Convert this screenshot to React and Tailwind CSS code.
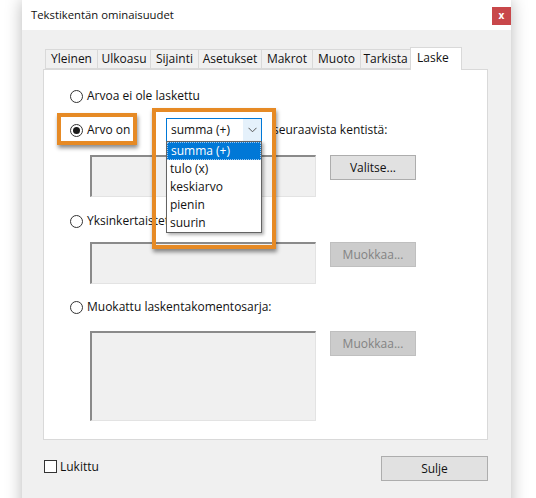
import React from 'react';

const tabs = [
  { label: 'Yleinen', w: 'w-[53px]' },
  { label: 'Ulkoasu', w: 'w-[54px]' },
  { label: 'Sijainti', w: 'w-[49px]' },
  { label: 'Asetukset', w: 'w-[64px]' },
  { label: 'Makrot', w: 'w-[52px]' },
  { label: 'Muoto', w: 'w-[49px]' },
  { label: 'Tarkista', w: 'w-[51px]' },
];

const options = ['summa (+)', 'tulo (x)', 'keskiarvo', 'pienin', 'suurin'];

// Radio circle, optionally checked
const Radio = ({ checked }) => (
  <span className="w-[13px] h-[13px] rounded-full border border-[#333333] bg-white flex items-center justify-center shrink-0">
    {checked && <span className="w-[7px] h-[7px] rounded-full bg-[#1a1a1a]" />}
  </span>
);

// Sunken read-only field list
const FieldBox = ({ h }) => (
  <div className={`w-[226px] ${h} bg-[#f0f0f0] border-t-2 border-l-2 border-r border-b border-t-[#8a8a8a] border-l-[#8a8a8a] border-r-[#e3e3e3] border-b-[#e3e3e3]`} />
);

const Button = ({ children, disabled, className = '' }) => (
  <button
    className={`h-[25px] border text-[12px] flex items-center justify-center ${disabled ? 'bg-[#cccccc] border-[#bfbfbf] text-[#838383]' : 'bg-[#e1e1e1] border-[#adadad] text-[#111]'} ${className}`}
  >
    {children}
  </button>
);

const App = () => {
  return (
    <div className="w-[536px] h-[498px] bg-white relative overflow-hidden text-[12px] text-[#111]" style={{ fontFamily: '"Open Sans", "Noto Sans", sans-serif' }}>
      {/* Dialog */}
      <div className="ml-[22px] w-[489px] h-[520px] bg-[#f0f0f0] shadow-[0_0_16px_rgba(0,0,0,0.28)] flex flex-col">
        {/* Title bar */}
        <div className="h-[30px] bg-white flex items-start justify-between">
          <span className="pl-[9px] pt-[7px] text-[11.3px]">Tekstikentän ominaisuudet</span>
          <button className="mt-[7px] w-[19px] h-[18px] bg-[#c8474a] text-white text-[10px] font-bold flex items-center justify-center leading-none pb-[2px]">
            x
          </button>
        </div>

        {/* Body */}
        <div className="pl-[21px] pr-[23px] pt-[17px]">
          {/* Tab strip */}
          <div className="flex items-end pl-[2px] h-[22px]">
            {tabs.map((t) => (
              <div
                key={t.label}
                className={`${t.w} h-[20px] border border-[#d9d9d9] -ml-px first:ml-0 bg-[#f0f0f0] text-[12px] flex items-center justify-center`}
              >
                {t.label}
              </div>
            ))}
            <div className="w-[52px] h-[23px] -ml-px border border-b-0 border-[#d9d9d9] bg-white relative z-10 -mb-px pl-[6px] pt-[1px] text-[12px]">
              Laske
            </div>
          </div>

          {/* Panel */}
          <div className="h-[371px] bg-white border border-[#d9d9d9] pl-[26px] pt-[16px] flex flex-col">
            <div className="h-[20px] flex items-center gap-[4px]">
              <Radio />
              <span>Arvoa ei ole laskettu</span>
            </div>

            <div className="h-[24px] mt-[12px] flex items-center">
              <div className="w-[96px] flex items-center gap-[4px]">
                <Radio checked />
                <span>Arvo on</span>
              </div>
              <div className="w-[96px] h-[24px] border border-[#0078d7] bg-white flex items-center">
                <span className="flex-1 pl-[4px]">summa (+)</span>
                <span className="w-[18px] h-full bg-[#e5f1fb] flex items-center justify-center">
                  <svg width="9" height="6" viewBox="0 0 9 6" fill="none">
                    <path d="M0.5 0.8 L4.5 4.8 L8.5 0.8" stroke="#555" strokeWidth="1" />
                  </svg>
                </span>
              </div>
              <span className="ml-[11px]">seuraavista kentistä:</span>
            </div>

            <div className="mt-[13px] ml-[20px] flex items-start gap-[14px]">
              <FieldBox h="h-[42px]" />
              <Button className="w-[86px] h-[24px]">Valitse...</Button>
            </div>

            <div className="h-[20px] mt-[14px] flex items-center gap-[4px]">
              <Radio />
              <span>Yksinkertaistettu merkintä:</span>
            </div>

            <div className="mt-[11px] ml-[20px] flex items-start gap-[14px]">
              <FieldBox h="h-[42px]" />
              <Button disabled className="w-[86px]">Muokkaa...</Button>
            </div>

            <div className="h-[20px] mt-[13px] flex items-center gap-[4px]">
              <Radio />
              <span>Muokattu laskentakomentosarja:</span>
            </div>

            <div className="mt-[14px] ml-[20px] flex items-start gap-[14px]">
              <FieldBox h="h-[90px]" />
              <Button disabled className="w-[86px]">Muokkaa...</Button>
            </div>
          </div>

          {/* Footer */}
          <div className="mt-[16px] flex items-center justify-between">
            <div className="flex items-center gap-[3px] ml-[1px] -mt-[4px]">
              <span className="w-[13px] h-[13px] border border-[#333333] bg-white" />
              <span>Lukittu</span>
            </div>
            <Button className="w-[107px]">Sulje</Button>
          </div>
        </div>
      </div>

      {/* Open dropdown list */}
      <div className="absolute left-[166px] top-[141px] w-[96px] bg-white border border-[#646464] shadow-[2px_2px_3px_rgba(0,0,0,0.3)] z-20">
        {options.map((o, i) => (
          <div
            key={o}
            className={`h-[18px] pl-[3px] flex items-center ${i === 0 ? 'bg-[#0078d7] text-white border border-dotted border-[#9fc8ee]' : ''}`}
          >
            {o}
          </div>
        ))}
      </div>

      {/* Orange highlight frames */}
      <div className="absolute left-[57px] top-[113px] w-[80px] h-[32px] border-[4px] border-[#e68a25] shadow-[1px_3px_4px_rgba(0,0,0,0.45)] z-30" />
      <div className="absolute left-[152px] top-[108px] w-[124px] h-[141px] border-[4px] border-[#e68a25] shadow-[1px_3px_4px_rgba(0,0,0,0.45)] z-30" />
    </div>
  );
};

export default App;
